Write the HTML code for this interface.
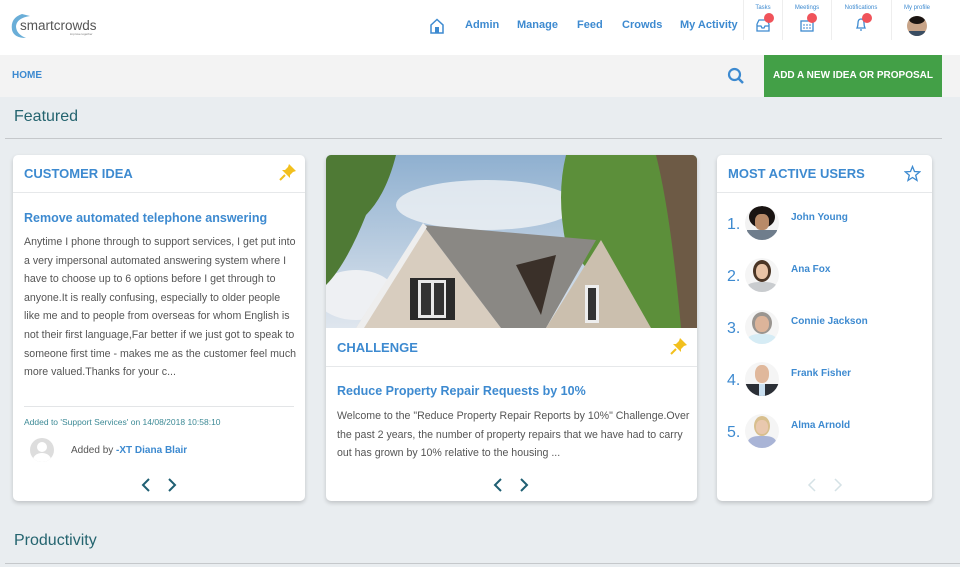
<!DOCTYPE html>
<html><head><meta charset="utf-8"><style>
*{margin:0;padding:0;box-sizing:border-box}
body{width:960px;height:567px;overflow:hidden;background:#e9edf0;font-family:"Liberation Sans",sans-serif;position:relative}
.a{position:absolute;white-space:nowrap}
.nav{color:#3d8ad0;font-weight:bold;font-size:11px}
.sm{color:#3d8ad0;font-size:6px;text-align:center;width:50px}
.dot{position:absolute;width:10px;height:10px;border-radius:50%;background:#f0535a}
.card{position:absolute;background:#fff;border-radius:5px;box-shadow:0 2px 4px rgba(0,0,0,.18);overflow:hidden}
.ct{color:#3d8ad0;font-weight:bold;font-size:13px}
.hr{position:absolute;left:0;right:0;height:1px;background:#e6e8ea}
.body{color:#555;font-size:10.6px;line-height:18.6px;white-space:nowrap}
.user{color:#3d8ad0;font-weight:bold;font-size:10px}
.num{color:#3d8ad0;font-size:16px}
.av{position:absolute;width:34px;height:34px;border-radius:50%;overflow:hidden}
</style></head><body>
<div class="a" style="left:0;top:0;width:960px;height:55px;background:#fff"></div>
<svg class="a" style="left:8px;top:12px" width="26" height="28"><path d="M14 2 Q2 6 4 18 Q6 26 18 26 Q8 22 8 14 Q9 6 22 4Z" fill="#6aaed8"/></svg>
<div class="a" style="left:20px;top:18px;font-size:13.5px;color:#555">smartcrowds</div>
<div class="a" style="left:70px;top:32px;font-size:3px;color:#777">improve together</div>
<svg class="a" style="left:430px;top:18px" width="14" height="16" viewBox="0 0 14 16"><path d="M1 7 L7 1.5 L13 7 V15 H1Z" fill="none" stroke="#3d8ad0" stroke-width="1.5"/><rect x="5" y="9" width="4" height="6" fill="#3d8ad0"/></svg>
<div class="a nav" style="left:465px;top:19px">Admin</div>
<div class="a nav" style="left:517px;top:19px">Manage</div>
<div class="a nav" style="left:577px;top:19px">Feed</div>
<div class="a nav" style="left:622px;top:19px">Crowds</div>
<div class="a nav" style="left:680px;top:19px">My Activity</div>
<div class="a" style="left:743px;top:0;width:1px;height:40px;background:#eee"></div>
<div class="a" style="left:782px;top:0;width:1px;height:40px;background:#eee"></div>
<div class="a" style="left:831px;top:0;width:1px;height:40px;background:#eee"></div>
<div class="a" style="left:891px;top:0;width:1px;height:40px;background:#eee"></div>
<div class="a sm" style="left:738px;top:5px">Tasks</div>
<div class="a sm" style="left:782px;top:5px">Meetings</div>
<div class="a sm" style="left:836px;top:5px">Notifications</div>
<div class="a sm" style="left:892px;top:5px">My profile</div>
<svg class="a" style="left:756px;top:18px" width="14" height="14"><path d="M1 6 V13 H13 V6 M1 6 L3 2 H11 L13 6 M1 8 H5 L6 10 H8 L9 8 H13" fill="none" stroke="#3d8ad0" stroke-width="1.3"/></svg>
<div class="dot" style="left:764px;top:13px"></div>
<svg class="a" style="left:800px;top:18px" width="14" height="14"><rect x="1" y="3" width="12" height="10" fill="none" stroke="#3d8ad0" stroke-width="1.3"/><path d="M3 7h2M6 7h2M9 7h2M3 10h2M6 10h2M9 10h2" stroke="#3d8ad0"/></svg>
<div class="dot" style="left:807px;top:13px"></div>
<svg class="a" style="left:855px;top:17px" width="12" height="15"><path d="M2 11 Q3 9 3 6 Q3 2 6 2 Q9 2 9 6 Q9 9 10 11Z M5 13 H7" fill="none" stroke="#3d8ad0" stroke-width="1.3"/></svg>
<div class="dot" style="left:862px;top:13px"></div>
<div class="a" style="left:907px;top:16px;width:20px;height:20px;border-radius:50%;background:#c8a488;overflow:hidden"><div style="position:absolute;left:2px;top:-2px;width:16px;height:10px;border-radius:50%;background:#1a1412"></div><div style="position:absolute;left:2px;top:15px;width:16px;height:8px;background:#3a4d62"></div></div>
<div class="a" style="left:0;top:55px;width:960px;height:42px;background:#f3f3f3"></div>
<div class="a" style="left:12px;top:70px;font-size:10px;font-weight:bold;color:#3d8ad0">HOME</div>
<svg class="a" style="left:727px;top:67px" width="18" height="18"><circle cx="7.5" cy="7.5" r="5.5" fill="none" stroke="#3d8ad0" stroke-width="2.2"/><path d="M11.5 11.5 L16 16" stroke="#3d8ad0" stroke-width="2.5"/></svg>
<div class="a" style="left:764px;top:55px;width:178px;height:42px;background:#43a047;color:#fff;font-weight:bold;font-size:10px;text-align:center;line-height:42px">ADD A NEW IDEA OR PROPOSAL</div>
<div class="a" style="left:14px;top:108px;font-size:16px;color:#24646f">Featured</div>
<div class="a" style="left:5px;top:138px;width:937px;height:1px;background:#c5c8cb"></div>

<div class="card" style="left:13px;top:155px;width:292px;height:346px">
<div class="a ct" style="left:11px;top:11px">CUSTOMER IDEA</div>
<svg class="a" style="left:266px;top:8px" width="18" height="18" viewBox="0 0 18 18"><path d="M10 1 L17 8 L14 9 L11 12 L11 15 L3 7 L6 7 L9 4Z" fill="#f2c01e"/><path d="M6 12 L1 17" stroke="#f2c01e" stroke-width="2"/></svg>
<div class="hr" style="top:37px"></div>
<div class="a" style="left:11px;top:56px;font-size:12.5px;font-weight:bold;color:#3d8ad0">Remove automated telephone answering</div>
<div class="a body" style="left:11px;top:78px">Anytime I phone through to support services, I get put into<br>a very impersonal automated answering system where I<br>have to choose up to 6 options before I get through to<br>anyone.It is really confusing, especially to older people<br>like me and to people from overseas for whom English is<br>not their first language,Far better if we just got to speak to<br>someone first time - makes me as the customer feel much<br>more valued.Thanks for your c...</div>
<div class="a" style="left:11px;top:251px;width:270px;height:1px;background:#e3e5e7"></div>
<div class="a" style="left:11px;top:262px;font-size:8.5px;color:#3d8a96">Added to 'Support Services' on 14/08/2018 10:58:10</div>
<div class="a" style="left:17px;top:283px;width:24px;height:24px;border-radius:50%;background:#ddd;overflow:hidden"><div style="position:absolute;left:7px;top:4px;width:10px;height:10px;border-radius:50%;background:#fff"></div><div style="position:absolute;left:3px;top:15px;width:18px;height:14px;border-radius:50%;background:#fff"></div></div>
<div class="a" style="left:58px;top:290px;font-size:10px;color:#555">Added by <b style="color:#3d8ad0">-XT Diana Blair</b></div>
<svg class="a" style="left:126px;top:322px" width="40" height="16"><path d="M10 2 L4 8 L10 14 M30 2 L36 8 L30 14" fill="none" stroke="#1f5f73" stroke-width="2"/></svg>
</div>

<div class="card" style="left:326px;top:155px;width:371px;height:346px">
<svg class="a" style="left:0;top:0" width="371" height="173">
<defs><linearGradient id="s" x1="0" y1="0" x2="0" y2="1"><stop offset="0" stop-color="#8fb0d0"/><stop offset="1" stop-color="#dfe6ee"/></linearGradient></defs>
<rect width="371" height="173" fill="url(#s)"/>
<ellipse cx="160" cy="50" rx="90" ry="25" fill="#f0f2f5" opacity=".8"/>
<ellipse cx="30" cy="140" rx="40" ry="25" fill="#eef0f3"/>
<path d="M0 0 H70 Q60 40 40 60 Q20 110 0 130Z" fill="#4f7a35"/>
<path d="M240 0 H371 V173 H300 Q270 120 240 90 Q230 40 240 0Z" fill="#5c8f3a"/>
<path d="M330 0 Q345 60 355 173 H371 V0Z" fill="#6d5a45"/>
<path d="M30 173 L97 70 L175 173Z" fill="#d8cdbf"/>
<path d="M97 70 L175 173 L220 173 L270 85 L97 70Z" fill="#8a8884"/>
<path d="M220 173 L275 85 L325 173Z" fill="#cbbfae"/>
<path d="M30 173 L97 68 L101 72 L38 173Z" fill="#eee"/>
<rect x="84" y="123" width="45" height="42" fill="#2a2a2a"/><rect x="92" y="125" width="28" height="38" fill="#e8e8e8"/><rect x="95" y="128" width="10" height="32" fill="#333"/><rect x="108" y="128" width="10" height="32" fill="#333"/>
<rect x="259" y="130" width="14" height="38" fill="#eee"/><rect x="262" y="133" width="8" height="32" fill="#333"/>
<path d="M190 110 L230 100 L215 160Z" fill="#3a3029"/>
</svg>
<div class="a ct" style="left:11px;top:185px">CHALLENGE</div>
<svg class="a" style="left:344px;top:182px" width="18" height="18" viewBox="0 0 18 18"><path d="M10 1 L17 8 L14 9 L11 12 L11 15 L3 7 L6 7 L9 4Z" fill="#f2c01e"/><path d="M6 12 L1 17" stroke="#f2c01e" stroke-width="2"/></svg>
<div class="hr" style="top:211px"></div>
<div class="a" style="left:11px;top:229px;font-size:12.5px;font-weight:bold;color:#3d8ad0">Reduce Property Repair Requests by 10%</div>
<div class="a body" style="left:11px;top:252px">Welcome to the "Reduce Property Repair Reports by 10%" Challenge.Over<br>the past 2 years, the number of property repairs that we have had to carry<br>out has grown by 10% relative to the housing ...</div>
<svg class="a" style="left:165px;top:322px" width="40" height="16"><path d="M10 2 L4 8 L10 14 M30 2 L36 8 L30 14" fill="none" stroke="#1f5f73" stroke-width="2"/></svg>
</div>

<div class="card" style="left:717px;top:155px;width:215px;height:346px">
<div class="a ct" style="left:11px;top:11px">MOST ACTIVE USERS</div>
<svg class="a" style="left:187px;top:10px" width="17" height="17"><path d="M8.5 1.5 L10.5 6.5 L15.8 6.8 L11.7 10.2 L13 15.4 L8.5 12.5 L4 15.4 L5.3 10.2 L1.2 6.8 L6.5 6.5Z" fill="none" stroke="#3d8ad0" stroke-width="1.3"/></svg>
<div class="hr" style="top:37px"></div>
<div class="a num" style="left:10px;top:61px">1.</div><div class="av" style="left:28px;top:51px;background:#f2f2f2"><div style="position:absolute;left:4px;top:0;width:26px;height:22px;border-radius:50%;background:#1a1412"></div><div style="position:absolute;left:10px;top:8px;width:14px;height:16px;border-radius:40%;background:#b88a68"></div><div style="position:absolute;left:2px;top:24px;width:30px;height:12px;background:#6f7d8c"></div></div><div class="a user" style="left:74px;top:57px">John Young</div>
<div class="a num" style="left:10px;top:113px">2.</div><div class="av" style="left:28px;top:103px;background:#f5f5f5"><div style="position:absolute;left:8px;top:2px;width:18px;height:22px;border-radius:50%;background:#4a3525"></div><div style="position:absolute;left:11px;top:6px;width:12px;height:15px;border-radius:45%;background:#e8c3a6"></div><div style="position:absolute;left:2px;top:24px;width:30px;height:12px;border-radius:40%;background:#c9cccf"></div></div><div class="a user" style="left:74px;top:109px">Ana Fox</div>
<div class="a num" style="left:10px;top:165px">3.</div><div class="av" style="left:28px;top:155px;background:#f5f5f5"><div style="position:absolute;left:7px;top:2px;width:20px;height:22px;border-radius:50%;background:#9a9590"></div><div style="position:absolute;left:10px;top:6px;width:14px;height:16px;border-radius:45%;background:#dcb49a"></div><div style="position:absolute;left:3px;top:24px;width:28px;height:12px;border-radius:40%;background:#d6ecf5"></div></div><div class="a user" style="left:74px;top:161px">Connie Jackson</div>
<div class="a num" style="left:10px;top:217px">4.</div><div class="av" style="left:28px;top:207px;background:#f5f5f5"><div style="position:absolute;left:10px;top:3px;width:14px;height:18px;border-radius:45%;background:#e0b89c"></div><div style="position:absolute;left:0;top:22px;width:34px;height:14px;background:#2b2f36"></div><div style="position:absolute;left:14px;top:22px;width:6px;height:14px;background:#c9dff0"></div></div><div class="a user" style="left:74px;top:213px">Frank Fisher</div>
<div class="a num" style="left:10px;top:269px">5.</div><div class="av" style="left:28px;top:259px;background:#f5f5f5"><div style="position:absolute;left:9px;top:2px;width:16px;height:20px;border-radius:50%;background:#d8bf8e"></div><div style="position:absolute;left:11px;top:6px;width:12px;height:14px;border-radius:45%;background:#e9c8ae"></div><div style="position:absolute;left:3px;top:22px;width:28px;height:14px;border-radius:40%;background:#a9b4d6"></div></div><div class="a user" style="left:74px;top:265px">Alma Arnold</div>
<svg class="a" style="left:88px;top:322px" width="40" height="16"><path d="M10 2 L4 8 L10 14 M30 2 L36 8 L30 14" fill="none" stroke="#d5e2e6" stroke-width="1.5"/></svg>
</div>

<div class="a" style="left:14px;top:532px;font-size:16px;color:#24646f">Productivity</div>
<div class="a" style="left:5px;top:563px;width:955px;height:1px;background:#c5c8cb"></div>
</body></html>
